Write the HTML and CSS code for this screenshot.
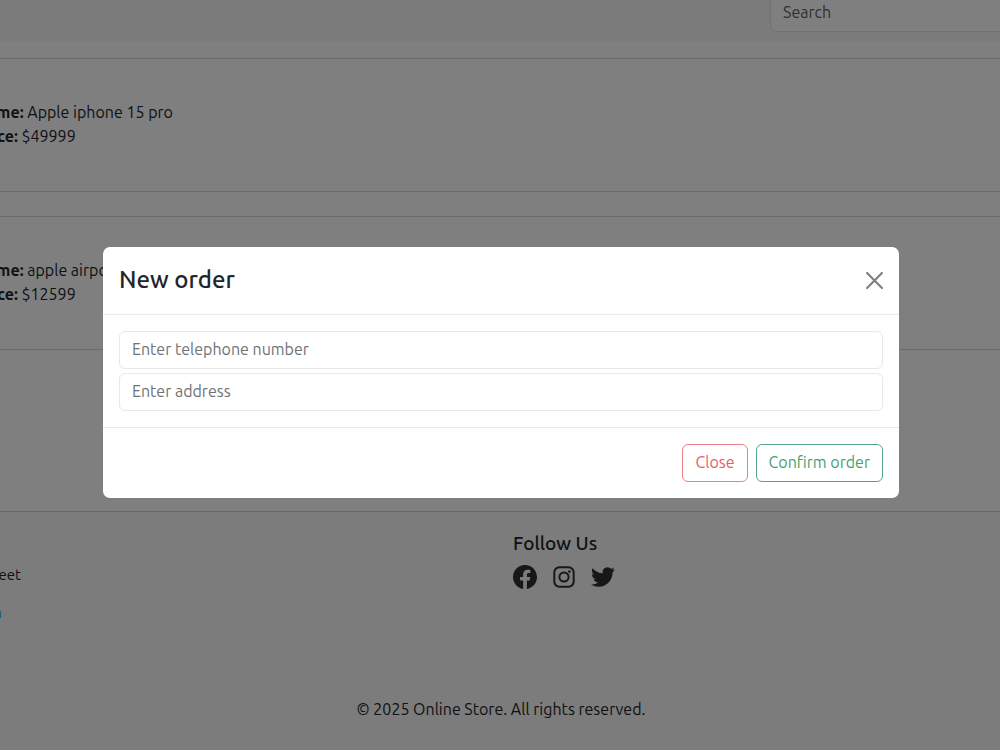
FILE: index.html
```html
<!DOCTYPE html>
<html lang="en">
<head>
<meta charset="utf-8">
<title>Online Store</title>
<link rel="stylesheet" href="styles.css">
</head>
<body>
<div class="page">
  <header class="topbar">
    <input class="field search" type="search" placeholder="Search" aria-label="Search">
  </header>
  <main class="products">
    <article class="product">
      <p><strong>Name:</strong> Apple iphone 15 pro</p>
      <p><strong>Price:</strong> $49999</p>
    </article>
    <article class="product">
      <p><strong>Name:</strong> apple airpods</p>
      <p><strong>Price:</strong> $12599</p>
    </article>
  </main>
  <footer class="footer">
    <div class="columns">
      <div class="contact">
        <p>Street</p>
        <a href="#">m</a>
      </div>
      <div class="follow">
        <h2>Follow Us</h2>
        <nav class="social" aria-label="Social media">
          <a href="#" aria-label="Facebook"><svg viewBox="0 0 16 16"><path d="M16 8.049c0-4.446-3.582-8.05-8-8.05C3.58 0-.002 3.603-.002 8.05c0 4.017 2.926 7.347 6.75 7.951v-5.625h-2.03V8.05H6.75V6.275c0-2.017 1.195-3.131 3.022-3.131.876 0 1.791.157 1.791.157v1.98h-1.009c-.993 0-1.303.621-1.303 1.258v1.51h2.218l-.354 2.326H9.25V16c3.824-.604 6.75-3.934 6.75-7.951"/></svg></a>
          <a href="#" aria-label="Instagram"><svg viewBox="0 0 24 24" fill="none" stroke="#2c2e30" stroke-width="2"><rect x="2.3" y="2.3" width="19.4" height="19.4" rx="5.2"/><circle cx="12" cy="12" r="4.6"/><circle cx="17.4" cy="6.6" r="1.3" fill="#2c2e30" stroke="none"/></svg></a>
          <a href="#" aria-label="Twitter"><svg viewBox="0 0 24 24"><path d="M23.953 4.57a10 10 0 01-2.825.775 4.958 4.958 0 002.163-2.723c-.951.555-2.005.959-3.127 1.184a4.92 4.92 0 00-8.384 4.482C7.69 8.095 4.067 6.13 1.64 3.162a4.822 4.822 0 00-.666 2.475c0 1.71.87 3.213 2.188 4.096a4.904 4.904 0 01-2.228-.616v.06a4.923 4.923 0 003.946 4.827 4.996 4.996 0 01-2.212.085 4.936 4.936 0 004.604 3.417 9.867 9.867 0 01-6.102 2.105c-.39 0-.779-.023-1.17-.067a13.995 13.995 0 007.557 2.209c9.053 0 13.998-7.496 13.998-13.985 0-.21 0-.42-.015-.63A9.935 9.935 0 0024 4.59z"/></svg></a>
        </nav>
      </div>
    </div>
    <p class="copyright">© 2025 Online Store. All rights reserved.</p>
  </footer>
</div>
<div class="backdrop">
  <form class="modal" role="dialog" aria-labelledby="modal-title">
    <div class="modal-header">
      <h1 id="modal-title">New order</h1>
      <button class="dismiss" type="button" aria-label="Dismiss"><svg viewBox="0 0 16 16"><path d="M1 1 15 15M15 1 1 15"/></svg></button>
    </div>
    <div class="modal-body">
      <input class="field" type="tel" placeholder="Enter telephone number" aria-label="Telephone number">
      <input class="field" type="text" placeholder="Enter address" aria-label="Address">
    </div>
    <div class="modal-footer">
      <button class="btn danger" type="button">Close</button>
      <button class="btn success" type="submit">Confirm order</button>
    </div>
  </form>
</div>
</body>
</html>
```
FILE: styles.css
```css
* { box-sizing: border-box; }
body {
  margin: 0;
  overflow: hidden;
  background: #fff;
  color: #212529;
  font: 16px/24px Ubuntu, "Noto Sans", sans-serif;
}
p, h1, h2 { margin: 0; }
.page {
  display: flex;
  flex-direction: column;
  min-height: 100vh;
  overflow: hidden;
}
.field {
  display: block;
  width: 100%;
  height: 38px;
  padding: 0 12px 2px;
  border: 1px solid #e6e8ea;
  border-radius: 6px;
  background: #fff;
  color: #212529;
  font: inherit;
}
.field::placeholder { color: #707376; opacity: 1; }
.topbar {
  margin-top: -16px;
  padding: 10px 0 10px 77%;
  background: #f6f6f6;
}
.search {
  width: 260px;
  border-color: #dee2e6;
}
.search::placeholder { color: #5c6064; }
.products {
  display: grid;
  gap: 24px;
  padding: 16px 0;
}
.product {
  padding: 41px 0 43px;
  border: solid #d6d6d6;
  border-width: 1px 0;
}
.product p { margin-left: -24px; }
.footer {
  margin-top: 145px;
  padding-top: 19px;
  flex: 1;
  border-top: 1px solid #d0d0d0;
  background: #f8f8f8;
}
.columns {
  display: flex;
  min-height: 124px;
}
.contact {
  display: flex;
  flex-direction: column;
  align-items: flex-start;
  width: 513px;
  padding-top: 32px;
  gap: 14px;
  font-size: 15px;
}
.contact p { margin-left: -21px; }
.contact a {
  margin-left: -11px;
  color: #20c0d0;
  text-decoration: none;
}
.follow h2 {
  font-size: 19px;
  font-weight: 500;
  line-height: 24px;
}
.social {
  display: flex;
  gap: 15px;
  margin-top: 10px;
}
.social svg {
  display: block;
  width: 24px;
  height: 24px;
}
.social path { fill: #2c2e30; }
.copyright {
  margin-top: 42px;
  padding-left: 2px;
  text-align: center;
}
.backdrop {
  position: fixed;
  inset: 0;
  display: flex;
  justify-content: center;
  align-items: center;
  padding: 0 0 5px 2px;
  background: rgba(0, 0, 0, .5);
}
.modal {
  width: 100%;
  max-width: 796px;
  border-radius: 7px;
  background: #fff;
}
.modal-header {
  display: flex;
  justify-content: space-between;
  align-items: center;
  padding: 15px 16px 16px;
  border-bottom: 1px solid #e9ebed;
}
.modal-header h1 {
  font-size: 24px;
  font-weight: 500;
  line-height: 36px;
}
.dismiss {
  padding: 0;
  border: 0;
  background: none;
}
.dismiss svg {
  display: block;
  width: 17px;
  height: 17px;
  stroke: #7f7f7f;
  stroke-width: 2;
  stroke-linecap: round;
}
.modal-body {
  display: grid;
  gap: 4px;
  padding: 16px;
}
.modal-footer {
  display: flex;
  justify-content: flex-end;
  gap: 8px;
  padding: 16px;
  border-top: 1px solid #e9ebed;
}
.btn {
  height: 38px;
  padding: 0 12px 2px;
  border: 1px solid;
  border-radius: 6px;
  background: #fff;
  font: inherit;
}
.danger { color: #e35d6a; border-color: #eb7f89; }
.success { color: #479f76; border-color: #55a680; }
```
